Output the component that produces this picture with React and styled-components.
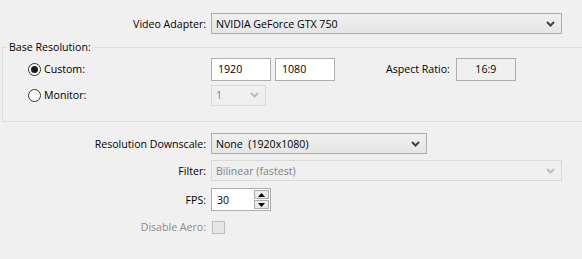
import styled, { createGlobalStyle } from "styled-components";

const Global = createGlobalStyle`
  body {
    margin: 0;
    background: #f0f0f0;
    font-family: "Open Sans", "Liberation Sans", sans-serif;
    font-size: 10.6px;
    color: #000;
  }
`;

const Page = styled.div`
  width: 582px;
  height: 259px;
  overflow: hidden;
  background: #f0f0f0;
  padding-top: 13px;
  box-sizing: border-box;
`;

const FormRow = styled.div`
  display: grid;
  grid-template-columns: 206px auto;
  column-gap: 5px;
  align-items: center;
  margin-top: ${(p) => p.gap || 0}px;
`;

const Label = styled.div`
  text-align: right;
  white-space: nowrap;
  color: ${(p) => (p.disabled ? "#8a8a8a" : "#000")};
`;

const Combo = styled.div`
  box-sizing: border-box;
  width: ${(p) => p.width}px;
  height: 21px;
  display: flex;
  align-items: center;
  justify-content: space-between;
  padding: 0 6px 0 4px;
  border: 1px solid ${(p) => (p.disabled ? "#d9d9d9" : "#acacac")};
  background: ${(p) =>
    p.disabled ? "#efefef" : "linear-gradient(#f0f0f0, #e5e5e5)"};
  color: ${(p) => (p.disabled ? "#838383" : "#000")};
  white-space: pre;
`;

const Chevron = ({ disabled }) => (
  <svg width="9" height="6" viewBox="0 0 9 6">
    <path
      d="M1 1 L4.5 4.5 L8 1"
      fill="none"
      stroke={disabled ? "#bcbcbc" : "#404040"}
      strokeWidth="2"
    />
  </svg>
);

const Group = styled.fieldset`
  margin: 6px 0 0 2px;
  padding: 3px 0 15px 0;
  width: 590px;
  box-sizing: border-box;
  border: 1px solid #dcdcdc;
  border-right: none;
`;

const Legend = styled.legend`
  margin-left: 4px;
  padding: 0 2px;
  line-height: 15px;
`;

const GroupRow = styled.div`
  display: flex;
  align-items: center;
  height: 22px;
  margin-top: ${(p) => p.gap || 0}px;
`;

const RadioLabel = styled.label`
  width: 208px;
  display: flex;
  align-items: center;
  gap: 3px;
  padding-left: 25px;
  box-sizing: border-box;
`;

const Radio = styled.span`
  width: 13px;
  height: 13px;
  box-sizing: border-box;
  border-radius: 50%;
  border: 1px solid #333;
  background: #fff;
  display: flex;
  align-items: center;
  justify-content: center;
  &::after {
    content: "";
    width: 7px;
    height: 7px;
    border-radius: 50%;
    background: ${(p) => (p.checked ? "#1a1a1a" : "transparent")};
  }
`;

const TextBox = styled.div`
  box-sizing: border-box;
  width: 60px;
  height: 23px;
  border: 1px solid #abadb3;
  background: #fff;
  display: flex;
  align-items: center;
  padding-left: 6px;
  margin-right: ${(p) => p.mr || 0}px;
`;

const ReadOnlyBox = styled.div`
  box-sizing: border-box;
  width: 60px;
  height: 23px;
  border: 1px solid #adadad;
  display: flex;
  align-items: center;
  justify-content: center;
  margin-left: 6px;
`;

const Bottom = styled.div`
  margin-top: 11px;
`;

const Spin = styled.div`
  box-sizing: border-box;
  width: 60px;
  height: 23px;
  border: 1px solid #abadb3;
  background: #fff;
  display: flex;
  align-items: center;
  justify-content: space-between;
  padding: 0 1px 0 5px;
`;

const SpinButtons = styled.div`
  display: flex;
  flex-direction: column;
  gap: 1px;
`;

const SpinButton = styled.div`
  width: 15px;
  height: 9px;
  box-sizing: border-box;
  border: 1px solid #acacac;
  background: linear-gradient(#f0f0f0, #e5e5e5);
  display: flex;
  align-items: center;
  justify-content: center;
`;

const Arrow = ({ up }) => (
  <svg width="7" height="4" viewBox="0 0 7 4">
    <path d={up ? "M0 4 L3.5 0 L7 4 Z" : "M0 0 L3.5 4 L7 0 Z"} fill="#000" />
  </svg>
);

const Check = styled.span`
  width: 13px;
  height: 13px;
  box-sizing: border-box;
  border: 1px solid #bcbcbc;
  background: #e6e6e6;
  margin-left: 1px;
`;

export default function App() {
  return (
    <Page>
      <Global />
      <FormRow>
        <Label>Video Adapter:</Label>
        <Combo width={351}>
          NVIDIA GeForce GTX 750
          <Chevron />
        </Combo>
      </FormRow>

      <Group>
        <Legend>Base Resolution:</Legend>
        <GroupRow>
          <RadioLabel>
            <Radio checked />
            Custom:
          </RadioLabel>
          <TextBox mr={4}>1920</TextBox>
          <TextBox mr={51}>1080</TextBox>
          Aspect Ratio:
          <ReadOnlyBox>16:9</ReadOnlyBox>
        </GroupRow>
        <GroupRow gap={4}>
          <RadioLabel>
            <Radio />
            Monitor:
          </RadioLabel>
          <Combo width={55} disabled>
            1
            <Chevron disabled />
          </Combo>
        </GroupRow>
      </Group>

      <Bottom>
        <FormRow>
          <Label>Resolution Downscale:</Label>
          <Combo width={216}>
            None  (1920x1080)
            <Chevron />
          </Combo>
        </FormRow>
        <FormRow gap={6}>
          <Label>Filter:</Label>
          <Combo width={351} disabled>
            Bilinear (fastest)
            <Chevron disabled />
          </Combo>
        </FormRow>
        <FormRow gap={7}>
          <Label>FPS:</Label>
          <Spin>
            30
            <SpinButtons>
              <SpinButton>
                <Arrow up />
              </SpinButton>
              <SpinButton>
                <Arrow />
              </SpinButton>
            </SpinButtons>
          </Spin>
        </FormRow>
        <FormRow gap={9}>
          <Label disabled>Disable Aero:</Label>
          <Check />
        </FormRow>
      </Bottom>
    </Page>
  );
}
